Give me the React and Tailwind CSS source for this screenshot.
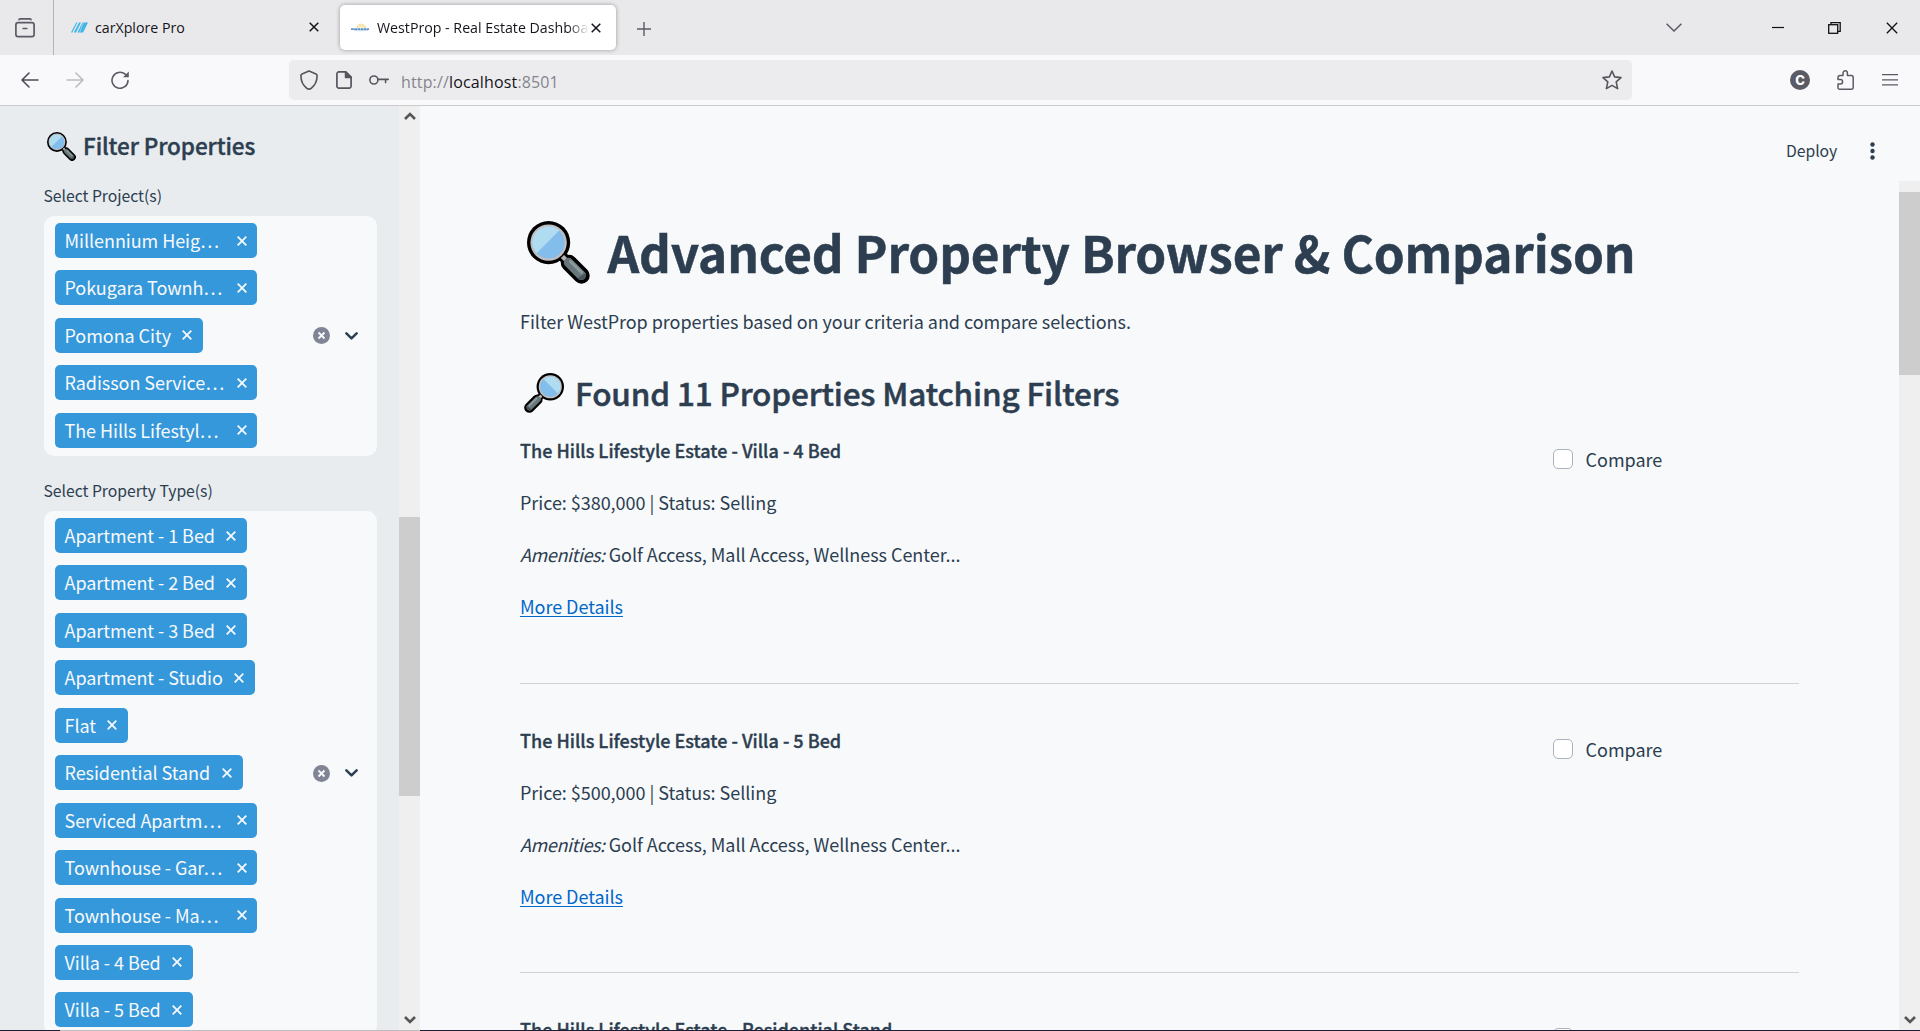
import React from "react";

/* ---------- icons ---------- */

function Magnifier({ className }) {
  return (
    <svg viewBox="0 0 63 63" className={className} fill="none">
      <path d="M36 36 L41 41" stroke="#000" strokeWidth="10" />
      <path d="M42 42 L54.5 54.5" stroke="#000" strokeWidth="16.5" strokeLinecap="round" />
      <circle cx="21.6" cy="21.6" r="21.6" fill="#000" />
      <circle cx="21.6" cy="21.6" r="18.2" fill="#c3bfbf" />
      <circle cx="21.6" cy="21.6" r="16" fill="#83bdec" />
      <path d="M9.6 32.2 A16 16 0 0 1 32.2 9.6 Z" fill="#b0dcf2" />
      <path d="M35.5 35.5 L40 40" stroke="#b4b4b4" strokeWidth="4.5" />
      <path d="M41.5 41.5 L54.3 54.3" stroke="#66767a" strokeWidth="9.5" strokeLinecap="round" />
      <path d="M43.5 40.5 L54.5 51.5" stroke="#8c9a9d" strokeWidth="3" strokeLinecap="round" />
      <path d="M50.5 57.2 A4.9 4.9 0 0 0 58.6 52.2 Z" fill="#46545a" />
    </svg>
  );
}

function Cross({ className }) {
  return (
    <svg viewBox="0 0 10 10" className={className} fill="none" stroke="currentColor">
      <path d="M0.7 0.7 L9.3 9.3 M9.3 0.7 L0.7 9.3" />
    </svg>
  );
}

function ScrollArrow({ up }) {
  return (
    <svg viewBox="0 0 12 8" className={up ? "h-2 w-3" : "h-2 w-3 rotate-180"} fill="none" stroke="#555" strokeWidth="2.6">
      <path d="M1 7 L6 2 L11 7" />
    </svg>
  );
}

/* ---------- browser chrome ---------- */

function TabStrip() {
  return (
    <div className="flex h-[55px] shrink-0 items-center bg-[#e9e9eb] font-['Open_Sans',sans-serif] text-[14.2px] text-[#15141a]">
      <div className="flex h-full w-[54px] items-center border-r border-[#b4b4b8] pl-[15px]">
        <svg viewBox="0 0 20 20" className="size-5" fill="none" stroke="#5b5b66" strokeWidth="1.7" strokeLinecap="round">
          <path d="M4 1.6 C4 1.2 4.4 0.9 5 0.9 H15 C15.6 0.9 16 1.2 16 1.6" />
          <rect x="0.9" y="4.7" width="18.2" height="14" rx="2.2" />
          <path d="M8.2 10.5 H11.8" />
        </svg>
      </div>
      <div className="flex w-[286px] items-center pr-[21px] pl-[17px]">
        <svg viewBox="0 0 17 11" className="mr-[7px] h-[11px] w-[17px]" fill="#3fb4e8">
          <path d="M5.2 0.5 H6.4 L1.4 10.5 H0 Z" />
          <path d="M8 0.5 H10 L5 10.5 H2.8 Z" />
          <path d="M11.6 0.5 H17 L12 10.5 H6.4 Z" />
          <path d="M12.6 0.5 L8.6 10.5" stroke="#e9e9eb" strokeWidth="0.5" />
        </svg>
        <span className="grow pt-px">carXplore Pro</span>
        <Cross className="size-[10px] stroke-[1.5]" />
      </div>
      <div className="flex h-[45px] w-[276px] items-center rounded-[5px] bg-white pr-[14px] pl-[11px] shadow-[0_0_4px_rgba(0,0,0,0.35)]">
        <svg viewBox="0 0 18 9" className="mr-[8px] h-[9px] w-[18px]" fill="none">
          <path d="M6 4.6 Q10 -1.6 14.6 4.6" stroke="#f6dc8c" strokeWidth="1.8" strokeDasharray="2.2 0.7" />
          <path d="M8 4.6 Q10.4 2 12.6 4.6" stroke="#f8e2a4" strokeWidth="1.2" />
          <path d="M0 6.2 H18" stroke="#5d92c8" strokeWidth="1.8" strokeDasharray="2.8 0.4" />
          <path d="M3 7.6 H17" stroke="#b4cfe6" strokeWidth="0.8" />
        </svg>
        <span className="w-[212px] overflow-hidden bg-linear-to-r from-[#15141a] from-90% to-transparent bg-clip-text pt-px whitespace-nowrap text-transparent">
          WestProp - Real Estate Dashboa
        </span>
        <Cross className="ml-[2px] size-[10px] shrink-0 stroke-[1.5]" />
      </div>
      <svg viewBox="0 0 14 14" className="mt-[2px] ml-[21px] size-[14px]" stroke="#5b5b66" strokeWidth="1.4">
        <path d="M7 0 V14 M0 7 H14" />
      </svg>
      <svg viewBox="0 0 16 9" className="ml-auto h-[9px] w-4" fill="none" stroke="#5b5b66" strokeWidth="1.5">
        <path d="M0.6 0.7 L8 8 L15.4 0.7" />
      </svg>
      <svg viewBox="0 0 12 12" className="ml-[90px] size-3" stroke="#111" strokeWidth="1.2">
        <path d="M0 5.5 H12" />
      </svg>
      <svg viewBox="0 0 13 12" className="ml-[44px] h-3 w-[13px]" fill="none" stroke="#111" strokeWidth="1.3">
        <rect x="0.7" y="2.7" width="9" height="8.6" />
        <path d="M3 2.6 V0.7 H12.2 V9.3 H9.8" />
      </svg>
      <Cross className="mr-[22px] ml-[45px] size-3 stroke-[1.1] text-[#111]" />
    </div>
  );
}

function AddressBar() {
  return (
    <div className="flex h-[51px] shrink-0 items-center border-b border-[#cccccf] bg-[#f9f9fb]">
      <svg viewBox="0 0 18 16" className="ml-[21px] h-4 w-[18px]" fill="none" stroke="#4c4c56" strokeWidth="1.6" strokeLinecap="round" strokeLinejoin="round">
        <path d="M8 1 L1 8 L8 15 M1 8 H17" />
      </svg>
      <svg viewBox="0 0 18 16" className="ml-[27px] h-4 w-[18px]" fill="none" stroke="#bcbcc2" strokeWidth="1.6" strokeLinecap="round" strokeLinejoin="round">
        <path d="M10 1 L17 8 L10 15 M17 8 H1" />
      </svg>
      <svg viewBox="0 0 18 18" className="ml-[27px] size-[18px]" fill="none" stroke="#5b5b66" strokeWidth="1.6" strokeLinecap="round">
        <path d="M14.2 3.2 A8 8 0 1 0 17 9.6" />
        <path d="M17.8 0.4 V6.2 H12 Z" fill="#5b5b66" stroke="none" />
      </svg>
      <div className="ml-[160px] flex h-10 w-[1343px] items-center rounded-[5px] bg-[#ececee] text-[#56565e]">
        <svg viewBox="0 0 18 20" className="ml-[11px] h-5 w-[18px]" fill="none" stroke="currentColor" strokeWidth="1.6" strokeLinejoin="round">
          <path d="M9 0.9 L16 4 C16.8 4.4 17.1 4.9 17.1 5.6 C17.1 11.5 14.5 16 11 18.5 Q9 19.7 7 18.5 C3.5 16 0.9 11.5 0.9 5.6 C0.9 4.9 1.2 4.4 2 4 Z" />
        </svg>
        <svg viewBox="0 0 16 18" className="ml-[18px] h-[18px] w-4" fill="none" stroke="currentColor" strokeWidth="1.7" strokeLinejoin="round">
          <path d="M3 0.9 H9.8 L15.1 6.2 V15 A2 2 0 0 1 13.1 17.1 H3 A2 2 0 0 1 0.9 15 V3 A2 2 0 0 1 3 0.9 Z" />
          <path d="M9.6 1 V6.4 H15 Z" fill="currentColor" />
        </svg>
        <svg viewBox="0 0 20 10" className="ml-[17px] h-[10px] w-5" fill="none" stroke="currentColor" strokeWidth="1.6" strokeLinecap="round">
          <circle cx="4.9" cy="5" r="4" />
          <path d="M9 4.4 H19.2 M16.6 4.6 V7.6" />
        </svg>
        <span className="ml-[12px] pt-[3px] font-['Open_Sans',sans-serif] text-[16px] tracking-[0.15px] text-[#85858c]">
          http://<span className="text-[#15141a]">localhost</span>:8501
        </span>
        <svg viewBox="0 0 20 20" className="mr-[10px] ml-auto size-5" fill="none" stroke="currentColor" strokeWidth="1.6" strokeLinejoin="round">
          <path d="M10 1 L12.6 6.9 L19 7.6 L14.2 11.9 L15.6 18.6 L10 15.4 L4.4 18.6 L5.8 11.9 L1 7.6 L7.4 6.9 Z" />
        </svg>
      </div>
      <div className="ml-auto flex size-5 items-center justify-center rounded-full bg-[#5b5b66] font-['Inter',sans-serif] text-[13px] leading-none font-extrabold text-white">
        C
      </div>
      <svg viewBox="0 0 17 20" className="ml-[27px] h-5 w-[17px]" fill="none" stroke="#5b5b66" strokeWidth="1.5" strokeLinejoin="round">
        <path d="M6 5.6 V3 A2.2 2.2 0 0 1 10.4 3 V5.6 H14.4 A1.8 1.8 0 0 1 16.2 7.4 V17.4 A1.8 1.8 0 0 1 14.4 19.2 H2.8 A1.8 1.8 0 0 1 1 17.4 V14 H3.4 A2.2 2.2 0 0 0 3.4 9.6 H1 V7.4 A1.8 1.8 0 0 1 2.8 5.6 Z" />
      </svg>
      <svg viewBox="0 0 16 12" className="mr-[22px] ml-[28px] h-3 w-4" stroke="#5b5b66" strokeWidth="1.3">
        <path d="M0 0.7 H16 M0 5.8 H16 M0 10.9 H16" />
      </svg>
    </div>
  );
}

/* ---------- sidebar ---------- */

const PROJECTS = ["Millennium Heig…", "Pokugara Townh…", "Pomona City", "Radisson Service…", "The Hills Lifestyl…"];

const TYPES = [
  "Apartment - 1 Bed",
  "Apartment - 2 Bed",
  "Apartment - 3 Bed",
  "Apartment - Studio",
  "Flat",
  "Residential Stand",
  "Serviced Apartm…",
  "Townhouse - Gar…",
  "Townhouse - Ma…",
  "Villa - 4 Bed",
  "Villa - 5 Bed",
];

function Tag({ label }) {
  const clipped = label.endsWith("…");
  return (
    <div
      className={
        "flex h-[35px] items-center rounded-[5px] bg-[#3498db] pl-[9.5px] text-[18px] tracking-[-0.06px] text-[#f8f9fb] " +
        (clipped ? "w-[202px] pr-[10.5px]" : "pr-[11px]")
      }
    >
      <span className="grow leading-[35px] whitespace-nowrap">{label}</span>
      <Cross className="ml-[11.5px] size-[10px] shrink-0 stroke-[1.8]" />
    </div>
  );
}

function MultiSelect({ items, className }) {
  return (
    <div className={"flex w-[333px] shrink-0 justify-between rounded-[10px] bg-[#f8f9fb] pt-[7px] pr-[19.5px] pl-[11px] " + className}>
      <div className="flex flex-col items-start gap-[12.45px]">
        {items.map((t) => (
          <Tag key={t} label={t} />
        ))}
      </div>
      <div className="mb-[7px] flex items-center gap-[15px]">
        <svg viewBox="0 0 17 17" className="size-[17px]">
          <circle cx="8.5" cy="8.5" r="8.5" fill="#808495" />
          <path d="M5.5 5.5 L11.5 11.5 M11.5 5.5 L5.5 11.5" stroke="#f8f9fb" strokeWidth="1.9" />
        </svg>
        <svg viewBox="0 0 13 8" className="h-2 w-[13px]" fill="none" stroke="#2c3e50" strokeWidth="2.5" strokeLinecap="round" strokeLinejoin="round">
          <path d="M1.4 1.4 L6.5 6.4 L11.6 1.4" />
        </svg>
      </div>
    </div>
  );
}

function Sidebar() {
  return (
    <aside className="flex w-[420px] shrink-0 bg-[#e8ecef]">
      <div className="flex w-[399px] flex-col overflow-hidden pl-[44px]">
        <div className="mt-[21px] flex h-[36px] shrink-0 items-center">
          <Magnifier className="mt-[2px] ml-[2.5px] size-[29px]" />
          <h2 className="ml-[7.5px] text-[22.5px] leading-[36px] font-medium tracking-[-0.1px] [-webkit-text-stroke:0.4px_#2c3e50]">
            Filter Properties
          </h2>
        </div>
        <div className="mt-[21px] -ml-[0.5px] h-[24px] shrink-0 text-[15.75px] leading-[24px] tracking-[-0.03px]">Select Project(s)</div>
        <MultiSelect items={PROJECTS} className="mt-[8px] h-[240px] pb-[1px]" />
        <div className="mt-[23px] -ml-[0.5px] h-[24px] shrink-0 text-[15.75px] leading-[24px] tracking-[-0.03px]">Select Property Type(s)</div>
        <MultiSelect items={TYPES} className="mt-[8px] h-[524px]" />
      </div>
      <div className="flex w-[21px] flex-col items-center bg-[#efefef] pt-[6px]">
        <ScrollArrow up />
        <div className="mt-[397px] h-[279px] w-full bg-[#cdcdcd]" />
        <div className="mt-auto mb-[6px] flex">
          <ScrollArrow />
        </div>
      </div>
    </aside>
  );
}

/* ---------- main ---------- */

const PROPERTIES = [
  { name: "The Hills Lifestyle Estate - Villa - 4 Bed", price: "$380,000" },
  { name: "The Hills Lifestyle Estate - Villa - 5 Bed", price: "$500,000" },
  { name: "The Hills Lifestyle Estate - Residential Stand" },
];

function PropertyCard({ name, price }) {
  return (
    <div className="flex h-[224px] shrink-0">
      <div className="flex w-[1033px] flex-col gap-[20px] text-[18px] leading-[32px]">
        <p className="font-medium [-webkit-text-stroke:0.35px_#2c3e50]">{name}</p>
        {price && (
          <>
            <p className="tracking-[-0.04px]">Price: {price} | Status: Selling</p>
            <p className="tracking-[-0.04px]">
              <em className="tracking-[-0.4px]">Amenities:</em> Golf Access, Mall Access, Wellness Center...
            </p>
            <p className="tracking-[-0.04px]">
              <a className="text-[#0068c9] underline decoration-1 underline-offset-[2px]">More Details</a>
            </p>
          </>
        )}
      </div>
      <label className="mt-[9px] flex h-[32px] items-center text-[18px]">
        <span className="mr-[12.5px] size-[20px] rounded-[5px] border border-[#abb2bd] bg-white" />
        <span className="leading-[32px]">{price && "Compare"}</span>
      </label>
    </div>
  );
}

function Main() {
  return (
    <main className="flex grow flex-col overflow-hidden bg-[#f8f9fb]">
      <header className="flex h-[75px] shrink-0 items-center justify-end pt-[15px] pr-[45px]">
        <span className="text-[15.75px] leading-[24px] tracking-[-0.1px]">Deploy</span>
        <svg viewBox="0 0 5 18" className="ml-[33px] h-[18px] w-[5px]" fill="#2c3e50">
          <circle cx="2.5" cy="2.5" r="2.2" />
          <circle cx="2.5" cy="9" r="2.2" />
          <circle cx="2.5" cy="15.5" r="2.2" />
        </svg>
      </header>
      <div className="flex min-h-0 grow basis-0 justify-between">
        <div className="flex w-[1379px] flex-col overflow-hidden pl-[100px]">
          <div className="mt-[34px] flex h-[74px] shrink-0 items-center">
            <Magnifier className="mt-px ml-[6.5px] size-[63px]" />
            <h1 className="ml-[18px] text-[49.5px] leading-[74px] font-bold tracking-[-0.15px] whitespace-nowrap [-webkit-text-stroke:0.5px_#2c3e50]">
              Advanced Property Browser &amp; Comparison
            </h1>
          </div>
          <p className="mt-[16px] h-[32px] shrink-0 text-[18px] leading-[32px] tracking-[-0.04px]">
            Filter WestProp properties based on your criteria and compare selections.
          </p>
          <div className="mt-[27px] flex h-[56px] shrink-0 items-center">
            <Magnifier className="mt-[2px] ml-[4px] size-[40px] -scale-x-100" />
            <h2 className="ml-[11px] text-[31.5px] leading-[56px] font-medium tracking-[-0.15px] [-webkit-text-stroke:0.5px_#2c3e50]">
              Found 11 Properties Matching Filters
            </h2>
          </div>
          <div className="mt-[14px] flex flex-col">
            {PROPERTIES.map((p, i) => (
              <React.Fragment key={p.name}>
                {i > 0 && <div className="mt-[24.5px] mb-[40px] h-px w-[1279px] shrink-0 bg-[#cfd3d9]" />}
                <PropertyCard name={p.name} price={p.price} />
              </React.Fragment>
            ))}
          </div>
        </div>
        <div className="flex w-[21px] flex-col items-center bg-[#efefef] pt-[11px]">
          <div className="h-[183px] w-full bg-[#cdcdcd]" />
          <div className="mt-auto mb-[6px] flex">
            <ScrollArrow />
          </div>
        </div>
      </div>
    </main>
  );
}

export default function App() {
  return (
    <div className="flex h-[1031px] w-[1920px] flex-col overflow-hidden bg-[#f8f9fb] font-['Noto_Sans_CJK_SC','Noto_Sans',sans-serif] text-[#2c3e50]">
      <TabStrip />
      <AddressBar />
      <div className="flex min-h-0 grow basis-0">
        <Sidebar />
        <Main />
      </div>
      <div className="flex h-px shrink-0 bg-[#1f1d33]">
        <div className="ml-[60px] w-[360px] bg-[#bdbdbf]" />
      </div>
    </div>
  );
}
